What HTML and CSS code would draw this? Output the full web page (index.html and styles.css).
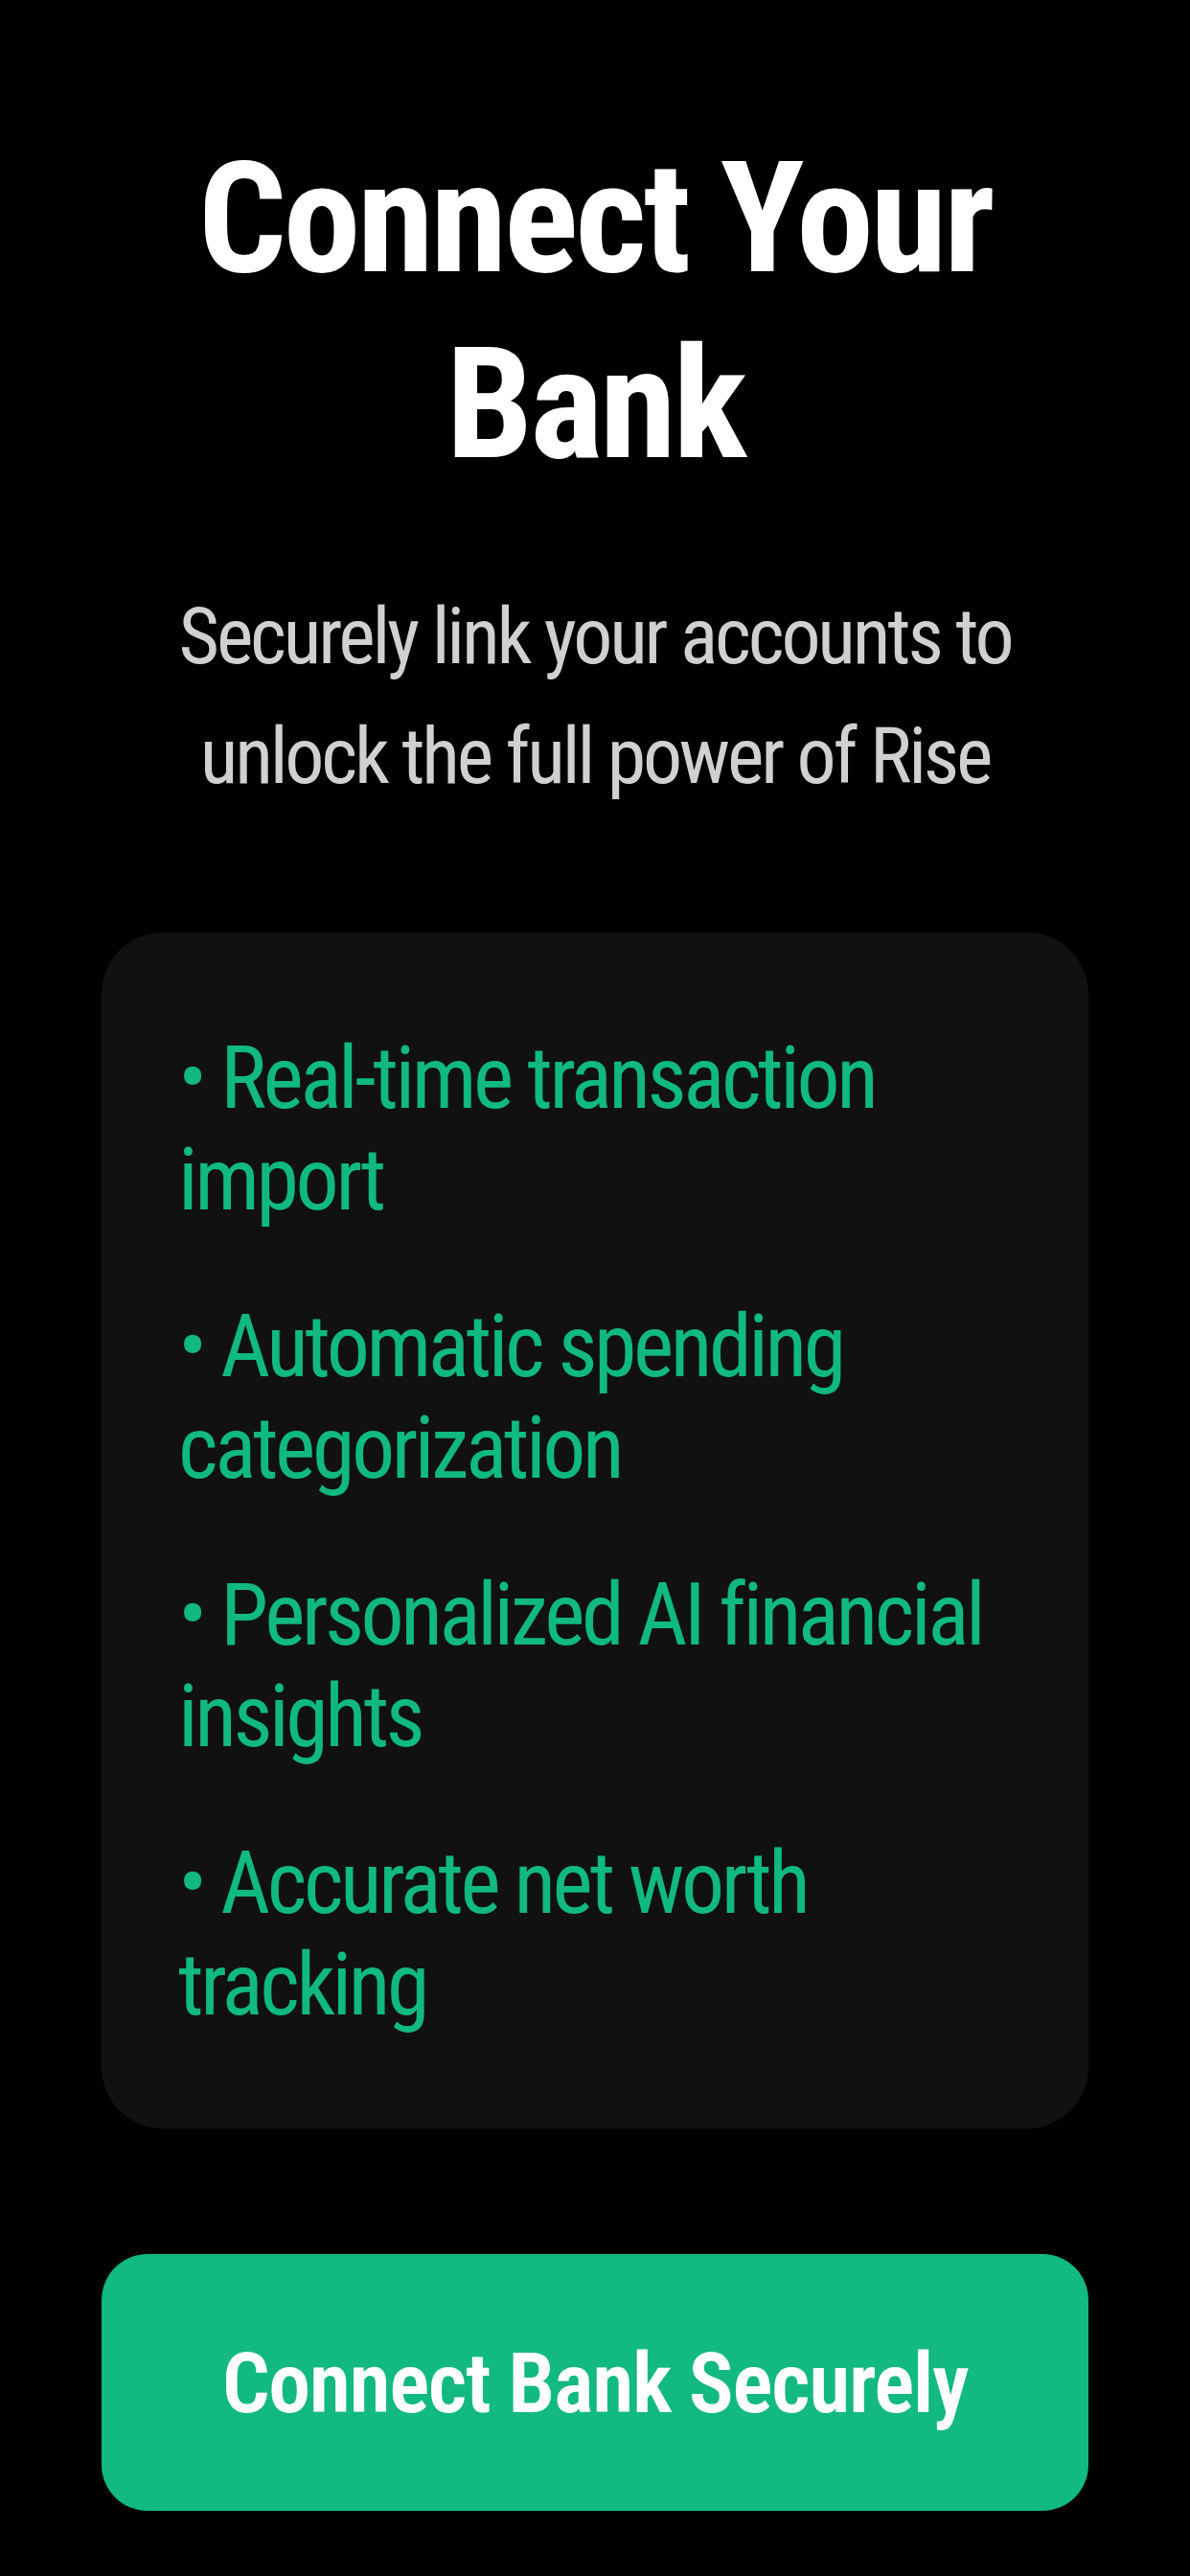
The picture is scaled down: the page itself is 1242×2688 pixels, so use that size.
FILE: index.html
```html
<!DOCTYPE html>
<html lang="en">
<head>
<meta charset="utf-8">
<title>Connect Your Bank</title>
<link rel="stylesheet" href="styles.css">
</head>
<body>
<main class="screen">
  <h1 class="title">Connect Your Bank</h1>
  <p class="subtitle">Securely link your accounts to unlock the full power of Rise</p>
  <section class="card">
    <ul class="features">
      <li class="feature">• Real-time transaction import</li>
      <li class="feature">• Automatic spending categorization</li>
      <li class="feature">• Personalized AI financial insights</li>
      <li class="feature">• Accurate net worth tracking</li>
    </ul>
  </section>
  <button class="cta" type="button">Connect Bank Securely</button>
</main>
</body>
</html>
```
FILE: styles.css
```css
html, body {
  margin: 0;
  padding: 0;
  background: #000;
}

body {
  font-family: Roboto, "Liberation Sans", sans-serif;
  font-stretch: 75%;
  color: #fff;
}

.screen {
  display: flex;
  flex-direction: column;
  padding: 0 106px;
  min-height: 2688px;
  box-sizing: border-box;
}

.title {
  margin: 131px 0 0;
  font-size: 162px;
  line-height: 194px;
  font-weight: 700;
  letter-spacing: -3.3px;
  text-align: center;
  color: #fff;
}

.subtitle {
  margin: 83px 0 0;
  padding: 0 60px;
  font-size: 82px;
  line-height: 125px;
  font-weight: 400;
  letter-spacing: -3.2px;
  text-align: center;
  color: #d0d0d0;
}

.card {
  margin-top: 121px;
  background: #111111;
  border-radius: 64px;
  padding: 100px 100px 96px 80px;
}

.features {
  list-style: none;
  margin: 0;
  padding: 0;
  display: flex;
  flex-direction: column;
  gap: 68px;
}

.feature {
  font-size: 90px;
  line-height: 106px;
  font-weight: 400;
  letter-spacing: -3.4px;
  color: #10b981;
}

.cta {
  margin-top: 131px;
  height: 268px;
  border: 0;
  border-radius: 48px;
  background: #12b981;
  color: #fff;
  font-family: inherit;
  font-stretch: 75%;
  font-size: 88px;
  font-weight: 600;
  letter-spacing: -1.4px;
  cursor: pointer;
}
```
